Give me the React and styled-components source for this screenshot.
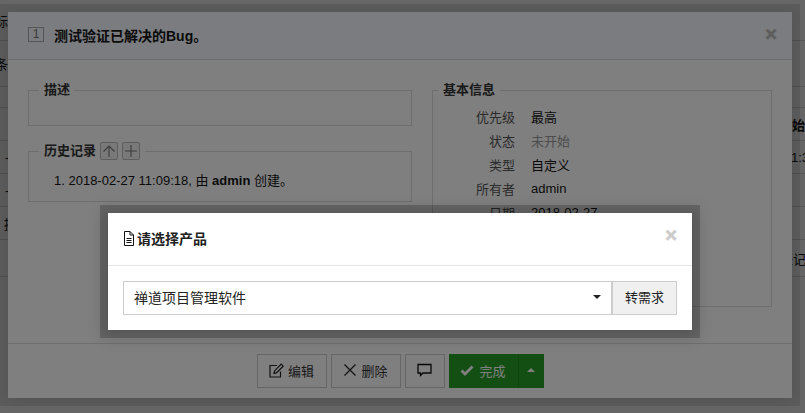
import React from "react";
import styled, { createGlobalStyle } from "styled-components";

const GlobalStyle = createGlobalStyle`
  html, body {
    margin: 0;
    height: 100%;
    overflow: hidden;
    background: #fff;
    font-family: "Liberation Sans", "Noto Sans CJK SC", sans-serif;
    font-size: 13px;
    color: #141414;
  }
  * { box-sizing: border-box; }
`;

const Pagina = styled.div`
  position: relative;
  width: 805px;
  height: 413px;
  overflow: hidden;
`;

const FilaFondo = styled.div`
  height: ${(props) => props.$alto}px;
  border-bottom: 1px solid #ddd;
  display: flex;
  align-items: center;
  justify-content: space-between;
  font-weight: ${(props) => (props.$negrita ? "bold" : "normal")};
`;

const TextoIzq = styled.span`
  margin-left: ${(props) => props.$margen}px;
`;

const TextoDer = styled.span`
  margin-left: auto;
  width: ${(props) => props.$ancho}px;
  white-space: nowrap;
  overflow: hidden;
`;

const Fondo = styled.div`
  position: absolute;
  inset: 0;
  background: rgba(0, 0, 0, ${(props) => props.$opacidad});
`;

const Dialogo = styled.div`
  position: absolute;
  left: 8px;
  top: 12px;
  width: 784px;
  height: 386px;
  background: #fff;
  box-shadow: 0 0 0 8px rgba(0, 0, 0, 0.1), 0 2px 12px rgba(0, 0, 0, 0.1);
  display: flex;
  flex-direction: column;
`;

const Cabecera = styled.div`
  height: 48px;
  flex: none;
  background: #f5f8fe;
  border-bottom: 1px solid #ddd;
  display: flex;
  align-items: center;
  padding: 0 15px 2px 20px;
  gap: 10px;
`;

const Numero = styled.span`
  width: 16px;
  height: 15px;
  border: 1px solid #aaa;
  color: #777;
  font-size: 12px;
  line-height: 13px;
  text-align: center;
`;

const Titulo = styled.strong`
  font-size: 14px;
  flex: 1;
`;

const Cerrar = styled.span`
  font-size: 20px;
  font-weight: bold;
  line-height: 1;
  -webkit-text-stroke: 0.6px ${(props) => props.$color};
  margin-bottom: ${(props) => props.$subir}px;
  color: ${(props) => props.$color};
`;

const Cuerpo = styled.div`
  flex: 1;
  display: grid;
  grid-template-columns: 384px 340px;
  column-gap: 20px;
  padding: 0 20px;
  align-items: start;
`;

const Columna = styled.div`
  display: flex;
  flex-direction: column;
  gap: 15px;
  padding-top: 20px;
`;

const Grupo = styled.fieldset`
  margin: 0;
  padding: 0 0 0 ${(props) => props.$sangria}px;
  border: 1px solid #ddd;
  height: ${(props) => props.$alto}px;
  min-width: 0;
`;

const Leyenda = styled.legend`
  padding: 0 5px;
  font-size: 13px;
  font-weight: bold;
  line-height: 20px;
  color: #333;
  display: flex;
  align-items: center;
  gap: 4px;
`;

const BotonMini = styled.span`
  width: 18px;
  height: 18px;
  border: 1px solid #bbb;
  border-radius: 2px;
  background: #f2f2f2;
  display: flex;
  align-items: center;
  justify-content: center;
`;

const Historia = styled.div`
  padding: 10px 0 0 15px;
  font-size: 13px;
  line-height: 20px;
`;

const ListaInfo = styled.div`
  padding-top: 4px;
`;

const FilaInfo = styled.div`
  display: grid;
  grid-template-columns: 77px auto;
  column-gap: 16px;
  height: 24px;
  align-items: center;
`;

const Etiqueta = styled.span`
  text-align: right;
  color: #555;
`;

const Valor = styled.span`
  color: ${(props) => (props.$apagado ? "#999" : "#141414")};
`;

const Pie = styled.div`
  height: 55px;
  flex: none;
  border-top: 1px solid #ddd;
  display: flex;
  justify-content: center;
  align-items: flex-start;
  padding-top: 10px;
  gap: 4px;
`;

const Boton = styled.button`
  height: 34px;
  width: ${(props) => props.$ancho}px;
  padding: 0 0 2px;
  border: 1px solid #ccc;
  background: #fff;
  font: inherit;
  color: #333;
  display: flex;
  align-items: center;
  justify-content: center;
  gap: 4px;
`;

const BotonVerde = styled(Boton)`
  background: #279e27;
  border-color: #279e27;
  color: #fff;
  gap: 5px;
`;

const GrupoBotones = styled.div`
  display: flex;
`;

const BotonFlecha = styled(BotonVerde)`
  border-left-color: #218621;
`;

const Flecha = styled.span`
  width: 0;
  height: 0;
  border-left: 4px solid transparent;
  border-right: 4px solid transparent;
  border-bottom: 4px solid #fff;
`;

const Modal = styled.div`
  position: absolute;
  left: 108px;
  top: 213px;
  width: 584px;
  height: 117px;
  background: #fff;
  box-shadow: 0 0 0 8px rgba(0, 0, 0, 0.2), 0 2px 14px 6px rgba(0, 0, 0, 0.15);
  display: flex;
  flex-direction: column;
`;

const ModalCabecera = styled.div`
  height: 53px;
  flex: none;
  border-bottom: 1px solid #e5e5e5;
  display: flex;
  align-items: center;
  padding: 0 15px 2px;
  gap: 2px;
`;

const ModalTitulo = styled.strong`
  font-size: 14px;
  color: #222;
  flex: 1;
`;

const ModalCuerpo = styled.div`
  padding: 15px;
  display: flex;
`;

const Selector = styled.div`
  flex: 1;
  height: 34px;
  border: 1px solid #ccc;
  display: flex;
  align-items: center;
  justify-content: space-between;
  padding: 0 10px 2px;
  font-size: 14px;
  color: #222;
`;

const Triangulo = styled.span`
  width: 0;
  height: 0;
  border-left: 4px solid transparent;
  border-right: 4px solid transparent;
  border-top: 4px solid #222;
`;

const BotonAdjunto = styled.button`
  width: 65px;
  height: 34px;
  padding: 0 0 3px;
  border: 1px solid #ccc;
  background: #f0f0f0;
  font: inherit;
  color: #222;
`;

const IconoDoc = () => (
  <svg width="12" height="15" viewBox="0 0 12 15" fill="none" stroke="#111" strokeWidth="1">
    <path d="M1.500 .5h5.500l3.500 3.500v10.500h-9z" />
    <path d="M7 .5v3.500h3.500M3.500 7.500h5M3.500 9.500h5M3.500 11.500h5" />
  </svg>
);

const IconoEditar = () => (
  <svg width="15" height="15" viewBox="0 0 15 15" fill="none" stroke="#222" strokeWidth="1.200">
    <path d="M11.500 8.500v5.500h-10.500v-11.500h7" />
    <path d="M5 10.500l.7-2.800 6.500-6.500 2 2-6.500 6.500z" />
  </svg>
);

const IconoX = () => (
  <svg width="14" height="14" viewBox="0 0 14 14" stroke="#222" strokeWidth="1.200">
    <path d="M1.500 1.500l11 11M12.500 1.500l-11 11" />
  </svg>
);

const IconoComentario = () => (
  <svg width="15" height="14" viewBox="0 0 15 14" fill="none" stroke="#111" strokeWidth="1.300">
    <path d="M1 1.500h13v8.500h-8l-2.500 2.500v-2.500h-2.500z" />
  </svg>
);

const IconoCheck = () => (
  <svg width="14" height="11" viewBox="0 0 14 11" fill="none" stroke="#fff" strokeWidth="2.800">
    <path d="M1.500 5.500l3.500 3.500 7.500-7.500" />
  </svg>
);

const IconoArriba = () => (
  <svg width="14" height="14" viewBox="0 0 14 14" fill="none" stroke="#777" strokeWidth="1.100">
    <path d="M7 13V2M1.500 7.500L7 2l5.500 5.500" />
  </svg>
);

const IconoMas = () => (
  <svg width="14" height="14" viewBox="0 0 14 14" stroke="#777" strokeWidth="1.100">
    <path d="M7 1v12M1 7h12" />
  </svg>
);

const info = [
  { etiqueta: "优先级", valor: "最高" },
  { etiqueta: "状态", valor: "未开始", apagado: true },
  { etiqueta: "类型", valor: "自定义" },
  { etiqueta: "所有者", valor: "admin" },
  { etiqueta: "日期", valor: "2018-02-27" },
];

const filas = [
  { alto: 41, izq: "标", margen: -5 },
  { alto: 46, izq: "条", margen: -5 },
  { alto: 21 },
  { alto: 33, der: "始", ancho: 13, negrita: true },
  { alto: 33, izq: "-", margen: 5, der: "1:3", ancho: 14 },
  { alto: 33, izq: "-", margen: 5 },
  { alto: 33, izq: "提", margen: 4 },
  { alto: 37, der: "未记", ancho: 25 },
];

const App = () => {
  return (
    <Pagina>
      <GlobalStyle />
      {filas.map((fila, i) => (
        <FilaFondo key={i} $alto={fila.alto} $negrita={fila.negrita}>
          <TextoIzq $margen={fila.margen}>{fila.izq}</TextoIzq>
          {fila.der && <TextoDer $ancho={fila.ancho}>{fila.der}</TextoDer>}
        </FilaFondo>
      ))}
      <Fondo $opacidad={0.2} />
      <Dialogo>
        <Cabecera>
          <Numero>1</Numero>
          <Titulo>测试验证已解决的Bug。</Titulo>
          <Cerrar $color="#bbb" $subir={1}>×</Cerrar>
        </Cabecera>
        <Cuerpo>
          <Columna>
            <Grupo $alto={46} $sangria={10}>
              <Leyenda>描述</Leyenda>
            </Grupo>
            <Grupo $alto={61} $sangria={10}>
              <Leyenda>
                历史记录
                <BotonMini>
                  <IconoArriba />
                </BotonMini>
                <BotonMini>
                  <IconoMas />
                </BotonMini>
              </Leyenda>
              <Historia>
                1. 2018-02-27 11:09:18, 由 <b>admin</b> 创建。
              </Historia>
            </Grupo>
          </Columna>
          <Columna>
            <Grupo $alto={227} $sangria={5}>
              <Leyenda>基本信息</Leyenda>
              <ListaInfo>
                {info.map((fila) => (
                  <FilaInfo key={fila.etiqueta}>
                    <Etiqueta>{fila.etiqueta}</Etiqueta>
                    <Valor $apagado={fila.apagado}>{fila.valor}</Valor>
                  </FilaInfo>
                ))}
              </ListaInfo>
            </Grupo>
          </Columna>
        </Cuerpo>
        <Pie>
          <Boton $ancho={70}>
            <IconoEditar />
            编辑
          </Boton>
          <Boton $ancho={70}>
            <IconoX />
            删除
          </Boton>
          <Boton $ancho={40}>
            <IconoComentario />
          </Boton>
          <GrupoBotones>
            <BotonVerde $ancho={69}>
              <IconoCheck />
              完成
            </BotonVerde>
            <BotonFlecha $ancho={26}>
              <Flecha />
            </BotonFlecha>
          </GrupoBotones>
        </Pie>
      </Dialogo>
      <Fondo $opacidad={0.5} />
      <Modal>
        <ModalCabecera>
          <IconoDoc />
          <ModalTitulo>请选择产品</ModalTitulo>
          <Cerrar $color="#ccc" $subir={6}>×</Cerrar>
        </ModalCabecera>
        <ModalCuerpo>
          <Selector>
            禅道项目管理软件
            <Triangulo />
          </Selector>
          <BotonAdjunto>转需求</BotonAdjunto>
        </ModalCuerpo>
      </Modal>
    </Pagina>
  );
};

export default App;
